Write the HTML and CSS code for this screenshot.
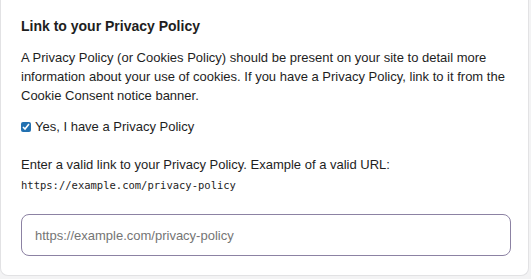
FILE: index.html
```html
<!DOCTYPE html>
<html lang="en">
<head>
    <meta charset="UTF-8">
    <meta name="viewport" content="width=device-width, initial-scale=1.0">
    <title>Privacy Policy link</title>
    <link rel="stylesheet" href="styles.css">
</head>
<body>

    <div class="card">
        <h2 class="card-title">Link to your Privacy Policy</h2>
        <p class="description">A Privacy Policy (or Cookies Policy) should be present on your site to detail more information about your use of cookies. If you have a Privacy Policy, link to it from the Cookie Consent notice banner.</p>

        <label class="check-row">
            <input type="checkbox" checked>
            <span>Yes, I have a Privacy Policy</span>
        </label>

        <p class="hint">Enter a valid link to your Privacy Policy. Example of a valid URL:</p>
        <code class="example">https://example.com/privacy-policy</code>

        <input type="text" class="url-input" placeholder="https://example.com/privacy-policy">
    </div>

</body>
</html>
```

FILE: styles.css
```css
body {
    margin: 0 2px 0 0;
    background-color: #f3f3f4;
    font-family: "Liberation Sans", Arial, sans-serif;
    color: #1e1e1e;
}
.card {
    background-color: #fff;
    border: 1px solid #e2e2e4;
    border-top: none;
    border-radius: 0 0 8px 8px;
    padding: 17px 17px 18px 20px;
    height: 276px;
    box-sizing: border-box;
}
.card-title {
    font-size: 14px;
    font-weight: bold;
    margin: 0 0 13px 0;
    line-height: 18px;
}
.description {
    font-size: 13px;
    line-height: 19px;
    margin: 0 0 12px 0;
}
.check-row {
    display: flex;
    align-items: center;
    gap: 4px;
    font-size: 13px;
    line-height: 19px;
}
.check-row input {
    margin: 0;
    width: 10px;
    height: 10px;
    accent-color: #2271b1;
}
.hint {
    font-size: 13px;
    line-height: 19px;
    margin: 19px 0 3px 0;
}
.example {
    display: block;
    font-family: "DejaVu Sans Mono", "Liberation Mono", monospace;
    font-size: 10.5px;
    line-height: 16px;
}
.url-input {
    display: block;
    width: 100%;
    box-sizing: border-box;
    height: 42px;
    margin-top: 21px;
    border: 1px solid #8c82a3;
    border-radius: 8px;
    padding: 0 13px;
    font-family: "Liberation Sans", Arial, sans-serif;
    font-size: 13px;
    color: #1e1e1e;
    outline: none;
}
.url-input::placeholder {
    color: #757575;
}
```
